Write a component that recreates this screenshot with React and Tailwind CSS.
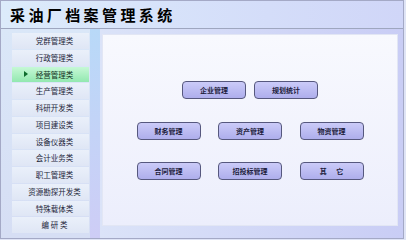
import React from "react";

const items = [
  "党群管理类",
  "行政管理类",
  "经营管理类",
  "生产管理类",
  "科研开发类",
  "项目建设类",
  "设备仪器类",
  "会计业务类",
  "职工管理类",
  "资源勘探开发类",
  "特殊载体类",
  "编 研 类",
];

const font = { fontFamily: '"Noto Sans CJK SC", "Noto Sans", sans-serif' };

function Btn({ children }) {
  return (
    <div className="w-[64px] h-[18px] rounded-[4px] border border-[#56587e] bg-gradient-to-b from-[#cbcbf8] to-[#aeaeec] flex items-center justify-center text-[7px] font-bold text-[#1c1c3c] leading-none">
      {children}
    </div>
  );
}

export default function App() {
  return (
    <div className="w-[406px] h-[240px] bg-[#dfe4f6] pr-[2px] pb-[1px]" style={font}>
      <div className="w-full h-full flex flex-col border-t border-r border-b border-l border-[#a4a9c6]">
        <div className="h-[28px] shrink-0 flex items-center pl-[9px] bg-gradient-to-r from-[#dcebfb] to-[#d0d6f8] border-b border-[#9ea6bf]">
          <span className="text-[15px] font-bold tracking-[3.4px] text-black leading-none">
            采油厂档案管理系统
          </span>
        </div>
        <div className="flex-1 flex min-h-0">
          <div className="w-[99px] shrink-0 flex bg-gradient-to-b from-[#dae7f8] to-[#d6def4]">
            <div className="w-[11px]" />
            <div className="w-[77px] flex flex-col gap-px pt-[4px]">
              {items.map((t, i) => {
                const active = i === 2;
                return (
                  <div
                    key={t}
                    className={
                      "relative h-[15.75px] flex items-center justify-center pl-[8px] text-[7.5px] leading-none whitespace-pre " +
                      (active
                        ? "bg-gradient-to-b from-[#c6f8d6] to-[#92e8b0] text-[#10301c]"
                        : "bg-gradient-to-b from-[#eaf0fa] to-[#dfe6f5] text-[#23263a]")
                    }
                  >
                    {active && (
                      <span className="absolute left-[12px] top-1/2 -translate-y-1/2 w-0 h-0 border-t-[3px] border-b-[3px] border-l-[4px] border-t-transparent border-b-transparent border-l-[#0d6b2c]" />
                    )}
                    {t}
                  </div>
                );
              })}
            </div>
            <div className="w-[1px]" />
            <div className="w-[10px] bg-gradient-to-b from-[#b8d9f8] to-[#cecdf6]" />
          </div>
          <div className="flex-1 flex flex-col pl-[2px] pr-[5px] pt-[5px] pb-[12px] bg-gradient-to-r from-[#dbe3f8] to-[#c9cdf5]">
            <div className="flex-1 flex flex-col items-center pt-[46px] bg-gradient-to-b from-[#f8f9fe] to-[#eceefc] border border-[#e2e6f4]">
              <div className="flex gap-[8px]">
                <Btn>企业管理</Btn>
                <Btn>规划统计</Btn>
              </div>
              <div className="flex gap-[17.5px] mt-[23px]">
                <Btn>财务管理</Btn>
                <Btn>资产管理</Btn>
                <Btn>物资管理</Btn>
              </div>
              <div className="flex gap-[17.5px] mt-[22px]">
                <Btn>合同管理</Btn>
                <Btn>招投标管理</Btn>
                <Btn>
                  <span className="whitespace-pre">其      它</span>
                </Btn>
              </div>
            </div>
          </div>
        </div>
      </div>
    </div>
  );
}
